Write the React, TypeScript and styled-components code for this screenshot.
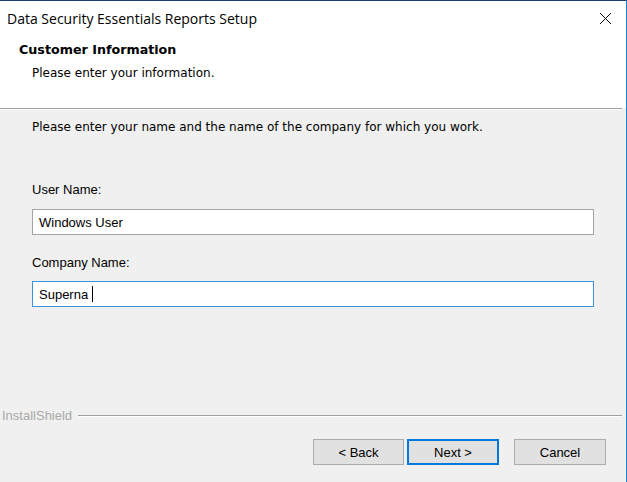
import React from "react";
import styled, { createGlobalStyle } from "styled-components";

const Global = createGlobalStyle`
  html, body { margin: 0; padding: 0; background: #f0f0f0; }
  body { width: 627px; height: 482px; overflow: hidden; }
`;

const Window = styled.div`
  width: 627px;
  height: 482px;
  box-sizing: border-box;
  display: flex;
  flex-direction: column;
  border-top: 1px solid #1f3f73;
  border-right: 1px solid #1883d7;
  background: #f0f0f0;
  font-family: "Liberation Sans", Arial, sans-serif;
  color: #000;
`;

const TitleBar = styled.div`
  height: 35px;
  flex: none;
  display: flex;
  align-items: center;
  justify-content: space-between;
  background: #fff;
  padding: 0 14px 0 7px;
`;

const TitleText = styled.span`
  font-family: "Open Sans", "Noto Sans", sans-serif;
  font-size: 14px;
  color: #000;
`;

const CloseButton = styled.span`
  display: flex;
  width: 13px;
  height: 13px;
`;

const Header = styled.div`
  background: #fff;
  flex: none;
  height: 72px;
  box-sizing: border-box;
  padding: 5px 0 0 19px;
  display: flex;
  flex-direction: column;
`;

const HeaderTitle = styled.div`
  font-family: "DejaVu Sans", sans-serif;
  font-size: 12.7px;
  line-height: 17px;
  font-weight: bold;
`;

const HeaderSubtitle = styled.div`
  font-family: "DejaVu Sans", sans-serif;
  font-size: 12px;
  line-height: 16px;
  margin: 7px 0 0 13px;
`;

const Separator = styled.div`
  flex: none;
  height: 1px;
  margin-right: 4px;
  background: #a0a0a0;
  border-bottom: 1px solid #ffffff;
`;

const Body = styled.div`
  flex: 1;
  display: flex;
  flex-direction: column;
  padding: 9px 0 17px 0;
`;

const Content = styled.div`
  padding: 0 32px;
  display: flex;
  flex-direction: column;
`;

const Instruction = styled.div`
  font-family: "DejaVu Sans", sans-serif;
  font-size: 12px;
  line-height: 16px;
`;

const Label = styled.div<{ $top?: number }>`
  font-size: 13px;
  line-height: 16px;
  margin-top: ${(p) => p.$top ?? 0}px;
`;

const Input = styled.div<{ $focused?: boolean; $top?: number }>`
  box-sizing: border-box;
  height: 26px;
  margin-top: ${(p) => p.$top ?? 0}px;
  background: #fff;
  border: 1px solid ${(p) => (p.$focused ? "#3b93df" : "#a4a4a4")};
  display: flex;
  align-items: center;
  padding-left: 6px;
  font-size: 13px;
`;

const Caret = styled.span`
  display: inline-block;
  width: 1px;
  height: 16px;
  background: #000;
  margin-left: 4px;
`;

const Footer = styled.div`
  margin-top: auto;
  display: flex;
  flex-direction: column;
`;

const BrandRow = styled.div`
  display: flex;
  align-items: center;
  padding: 0 4px 0 2px;
  height: 16px;
`;

const Brand = styled.span`
  font-size: 13px;
  color: #a9a9a9;
`;

const BrandLine = styled.div`
  flex: 1;
  height: 1px;
  margin-left: 6px;
  margin-top: 2px;
  background: #a0a0a0;
  border-bottom: 1px solid #fff;
`;

const ButtonRow = styled.div`
  display: flex;
  justify-content: flex-end;
  margin-top: 16px;
  padding-right: 20px;
`;

const Button = styled.div<{ $default?: boolean; $gap?: number; $width?: number }>`
  box-sizing: border-box;
  width: ${(p) => p.$width ?? 92}px;
  height: 26px;
  margin-left: ${(p) => p.$gap ?? 0}px;
  background: #e1e1e1;
  border: ${(p) => (p.$default ? "2px solid #0078d7" : "1px solid #adadad")};
  display: flex;
  align-items: center;
  justify-content: center;
  font-size: 13px;
`;

export default function App() {
  return (
    <>
      <Global />
      <Window>
        <TitleBar>
          <TitleText>Data Security Essentials Reports Setup</TitleText>
          <CloseButton>
            <svg width="13" height="13" viewBox="0 0 13 13">
              <path d="M1 1 L12 12 M12 1 L1 12" stroke="#000" strokeWidth="1" />
            </svg>
          </CloseButton>
        </TitleBar>
        <Header>
          <HeaderTitle>Customer Information</HeaderTitle>
          <HeaderSubtitle>Please enter your information.</HeaderSubtitle>
        </Header>
        <Separator />
        <Body>
          <Content>
            <Instruction>Please enter your name and the name of the company for which you work.</Instruction>
            <Label $top={47}>User Name:</Label>
            <Input $top={11}>Windows User</Input>
            <Label $top={20}>Company Name:</Label>
            <Input $top={10} $focused>
              Superna
              <Caret />
            </Input>
          </Content>
          <Footer>
            <BrandRow>
              <Brand>InstallShield</Brand>
              <BrandLine />
            </BrandRow>
            <ButtonRow>
              <Button $width={91}>&lt; Back</Button>
              <Button $default $gap={3}>Next &gt;</Button>
              <Button $gap={15}>Cancel</Button>
            </ButtonRow>
          </Footer>
        </Body>
      </Window>
    </>
  );
}
